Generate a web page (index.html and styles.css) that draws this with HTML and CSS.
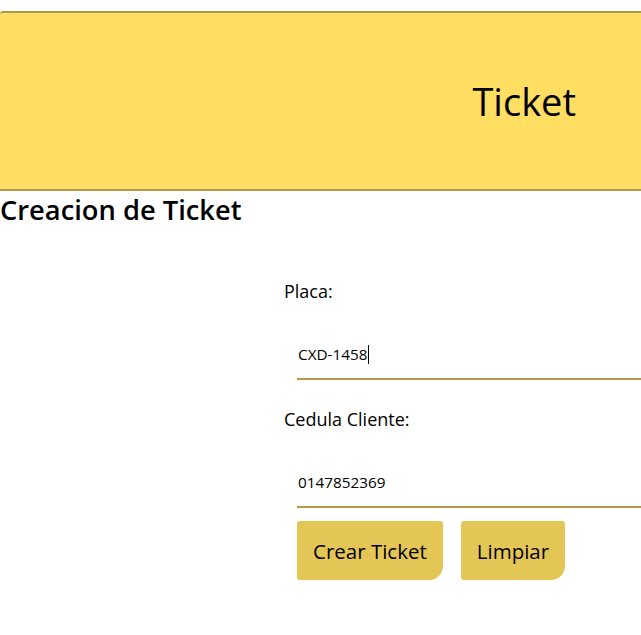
FILE: index.html
```html
<!DOCTYPE html>
<html lang="es">
<head>
<meta charset="utf-8">
<title>Ticket</title>
<link rel="stylesheet" href="styles.css">
</head>
<body>
<header class="topbar">
  <h1 class="topbar-title">Ticket</h1>
</header>
<h2 class="page-title">Creacion de Ticket</h2>
<form class="ticket-form">
  <div class="field">
    <label class="field-label" for="placa">Placa:</label>
    <div class="field-input-wrap">
      <span class="field-input">CXD-1458<span class="caret"></span></span>
    </div>
  </div>
  <div class="field">
    <label class="field-label" for="cedula">Cedula Cliente:</label>
    <div class="field-input-wrap">
      <span class="field-input">0147852369</span>
    </div>
  </div>
  <div class="actions">
    <button type="button" class="btn">Crear Ticket</button>
    <button type="button" class="btn">Limpiar</button>
  </div>
</form>
</body>
</html>
```
FILE: styles.css
```css
html, body {
  margin: 0;
  padding: 0;
  background: #ffffff;
  font-family: "Open Sans", "Noto Sans", sans-serif;
  color: #000;
}
body {
  width: 641px;
  overflow: hidden;
}
.topbar {
  margin-top: 11px;
  height: 176px;
  background: #ffde62;
  border-top: 2px solid #b09a48;
  border-bottom: 2px solid #b09a48;
  border-top-left-radius: 3px;
  display: flex;
  align-items: center;
  justify-content: flex-end;
  padding-right: 65px;
}
.topbar-title {
  margin: 0;
  font-size: 38px;
  font-weight: 400;
  line-height: 1;
}
.page-title {
  margin: 0;
  font-size: 27.3px;
  font-weight: 600;
  line-height: 38px;
}
.ticket-form {
  padding-left: 284px;
  padding-top: 51px;
}
.field {
  display: flex;
  flex-direction: column;
}
.field-label {
  font-size: 18px;
  line-height: 22px;
}
.field-input-wrap {
  margin-top: 38px;
  margin-left: 13px;
  width: 400px;
  height: 25px;
  padding-bottom: 13px;
  border-bottom: 2px solid #b09a48;
  display: flex;
  align-items: flex-end;
  box-sizing: content-box;
}
.field + .field {
  margin-top: 28px;
}
.field-input {
  font-size: 15.3px;
  line-height: 21px;
  padding-left: 1px;
  display: flex;
  align-items: center;
}
.caret {
  display: inline-block;
  width: 1px;
  height: 19px;
  background: #000;
  margin-left: 1px;
}
.actions {
  margin-top: 13px;
  margin-left: 13px;
  display: flex;
  gap: 18px;
}
.btn {
  background: #e3c655;
  border: none;
  font-family: "Open Sans", "Noto Sans", sans-serif;
  font-size: 20.5px;
  color: #000;
  height: 59px;
  padding: 0 16px;
  border-radius: 3px 3px 14px 3px;
}
```
